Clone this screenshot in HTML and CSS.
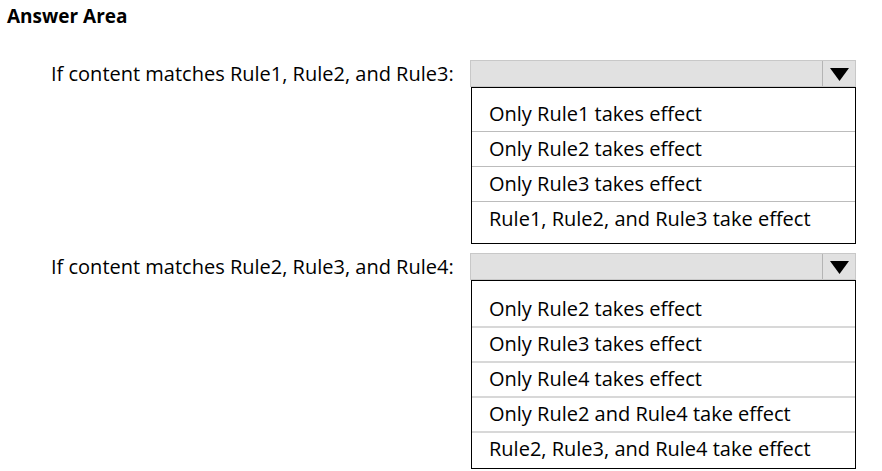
FILE: index.html
```html
<!DOCTYPE html>
<html lang="en">
<head>
<meta charset="utf-8">
<title>Answer Area</title>
<link rel="stylesheet" href="styles.css">
</head>
<body>
<div class="page">
  <h1 class="title">Answer Area</h1>

  <div class="question q1">
    <div class="label">If content matches Rule1, Rule2, and Rule3:</div>
    <div class="dropdown">
      <div class="bar">
        <div class="arrow">
          <svg width="19" height="13" viewBox="0 0 19 13"><polygon points="0,0 19,0 9.5,13" fill="#000"/></svg>
        </div>
      </div>
      <ul class="list list-a">
        <li>Only Rule1 takes effect</li>
        <li>Only Rule2 takes effect</li>
        <li>Only Rule3 takes effect</li>
        <li>Rule1, Rule2, and Rule3 take effect</li>
      </ul>
    </div>
  </div>

  <div class="question q2">
    <div class="label">If content matches Rule2, Rule3, and Rule4:</div>
    <div class="dropdown">
      <div class="bar">
        <div class="arrow">
          <svg width="19" height="13" viewBox="0 0 19 13"><polygon points="0,0 19,0 9.5,13" fill="#000"/></svg>
        </div>
      </div>
      <ul class="list list-b">
        <li>Only Rule2 takes effect</li>
        <li>Only Rule3 takes effect</li>
        <li>Only Rule4 takes effect</li>
        <li>Only Rule2 and Rule4 take effect</li>
        <li>Rule2, Rule3, and Rule4 take effect</li>
      </ul>
    </div>
  </div>
</div>
</body>
</html>
```

FILE: styles.css
```css
html, body {
  margin: 0;
  padding: 0;
  background: #fff;
}

body {
  font-family: "Open Sans", "Noto Sans", sans-serif;
  color: #000;
}

.page {
  padding: 5px 0 0 7px;
}

.title {
  margin: 0;
  font-size: 19px;
  font-weight: 700;
  line-height: 22px;
  letter-spacing: 0;
}

.question {
  display: flex;
  align-items: flex-start;
  margin-left: 44px;
}

.q1 {
  margin-top: 33px;
}

.q2 {
  margin-top: 9px;
}

.label {
  width: 419px;
  font-size: 20px;
  line-height: 27px;
  white-space: nowrap;
}

.dropdown {
  width: 386px;
}

.bar {
  height: 27px;
  box-sizing: border-box;
  border: 1px solid #c8c8c8;
  background: #e1e1e1;
  display: flex;
  justify-content: flex-end;
}

.arrow {
  width: 33px;
  border-left: 1px solid #b4b4b4;
  display: flex;
  align-items: center;
  justify-content: center;
  padding-top: 2px;
  box-sizing: border-box;
}

.arrow svg {
  display: block;
}

.list {
  list-style: none;
  margin: 0 0 0 1px;
  width: 385px;
  box-sizing: border-box;
  border: 1px solid #000;
  font-size: 20px;
}

.list li {
  height: 34px;
  line-height: 34px;
  padding-left: 17px;
  white-space: nowrap;
}

.list-a {
  padding: 9px 0 7px 0;
}

.list-a li {
  line-height: 33px;
  border-bottom: 1px solid #bcbcbc;
}

.list-a li:last-child {
  border-bottom: none;
}

.list-b {
  padding: 12px 0 0 0;
}

.list-b li {
  height: 33px;
  line-height: 31px;
  border-bottom: 2px solid #d8d8d8;
}

.list-b li:last-child {
  border-bottom: none;
  height: 35px;
}
```
